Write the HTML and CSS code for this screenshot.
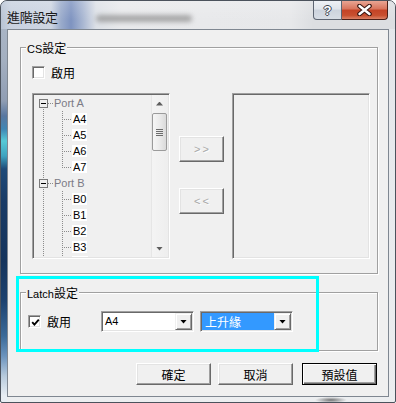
FILE: index.html
```html
<!DOCTYPE html>
<html>
<head>
<meta charset="utf-8">
<title>進階設定</title>
<link rel="stylesheet" href="styles.css">
</head>
<body>
<div class="window">
  <div class="titlebar">
    <span class="title cjk">進階設定</span>
    <span class="ghost"></span>
    <div class="caption">
      <div class="cap-btn help">?</div>
      <div class="cap-btn close">
        <svg width="17" height="12" viewBox="0 0 17 12"><path d="M3.5 2 L13.5 10 M13.5 2 L3.5 10" stroke="#3a1712" stroke-width="4.6" stroke-linecap="round" fill="none"/><path d="M3.5 2 L13.5 10 M13.5 2 L3.5 10" stroke="#ffffff" stroke-width="2.4" stroke-linecap="round" fill="none"/></svg>
      </div>
    </div>
  </div>
  <div class="client">
    <div class="group cs-group">
      <span class="group-title">CS<span class="cjk">設定</span></span>
      <div class="check-row">
        <span class="checkbox"></span><span class="check-label cjk">啟用</span>
      </div>
      <div class="lists">
        <div class="tree sunken">
          <div class="tree-items">
            <div class="row port first"><span class="exp"></span><span class="hdots"></span><span class="port-label">Port A</span></div>
            <div class="row child"><span class="elbow"></span><span class="item">A4</span></div>
            <div class="row child"><span class="elbow"></span><span class="item">A5</span></div>
            <div class="row child"><span class="elbow"></span><span class="item">A6</span></div>
            <div class="row child"><span class="elbow last"></span><span class="item">A7</span></div>
            <div class="row port"><span class="exp"></span><span class="hdots"></span><span class="port-label">Port B</span></div>
            <div class="row child"><span class="elbow"></span><span class="item">B0</span></div>
            <div class="row child"><span class="elbow"></span><span class="item">B1</span></div>
            <div class="row child"><span class="elbow"></span><span class="item">B2</span></div>
            <div class="row child"><span class="elbow"></span><span class="item">B3</span></div>
            <div class="row child"><span class="elbow"></span><span class="item item-partial"></span></div>
          </div>
          <div class="scrollbar">
            <div class="sb-btn"><span class="tri-up"></span></div>
            <div class="sb-thumb"><span class="grip"></span></div>
            <div class="sb-space"></div>
            <div class="sb-btn"><span class="tri-down"></span></div>
          </div>
        </div>
        <div class="move-btns">
          <div class="btn disabled">&gt;&gt;</div>
          <div class="btn disabled">&lt;&lt;</div>
        </div>
        <div class="listbox sunken"></div>
      </div>
    </div>

    <div class="group latch-group">
      <span class="group-title">Latch<span class="cjk">設定</span></span>
      <div class="latch-row">
        <div class="check-wrap">
          <span class="checkbox checked"><svg width="9" height="9" viewBox="0 0 9 9"><path d="M1.2 4.2 L3.4 6.6 L7.8 1.6" stroke="#000" stroke-width="1.9" fill="none"/></svg></span>
          <span class="check-label cjk">啟用</span>
        </div>
        <div class="combo sunken">
          <span class="combo-text">A4</span>
          <span class="combo-btn"><span class="tri-down dark"></span></span>
        </div>
        <div class="combo sunken">
          <span class="combo-text selected cjk">上升緣</span>
          <span class="combo-btn"><span class="tri-down dark"></span></span>
        </div>
      </div>
    </div>

    <div class="actions">
      <div class="btn push cjk">確定</div>
      <div class="btn push cjk">取消</div>
      <div class="btn push default cjk">預設值</div>
    </div>

    <div class="highlight"></div>
  </div>
</div>
</body>
</html>
```

FILE: styles.css
```css
* { box-sizing: border-box; }
html, body { margin: 0; padding: 0; }
body {
  width: 396px;
  height: 403px;
  overflow: hidden;
  background: #ffffff;
  font-family: "Liberation Sans", Arial, "Noto Sans CJK TC", sans-serif;
  font-size: 11px;
  color: #000;
}
.cjk {
  font-family: "Noto Sans CJK TC", "Noto Sans CJK JP", sans-serif;
  font-size: 12px;
}

/* window frame */
.window {
  width: 396px;
  height: 403px;
  border: 1px solid #4b525c;
  border-radius: 7px 7px 2px 2px;
  display: flex;
  flex-direction: column;
  overflow: hidden;
  background:
    linear-gradient(to bottom, #aeb9c9 0, #a3afc0 60px, #8f9db3 100px, #5877a0 115px, #3f86b4 128px, #56c9d6 140px, #3ea3bf 155px, #1e4a78 168px, #193b66 200px, #15345c 260px, #1d4270 300px, #3b6a99 335px, #6b93bd 355px, #b7cadc 375px, #e8eef4 395px) 0 0 / 6px 100% no-repeat,
    radial-gradient(ellipse 16px 3px at 330px 399px, rgba(50,50,50,.65), rgba(50,50,50,0)),
    linear-gradient(to bottom, #e3e6ea, #eceef0);
}

.titlebar {
  height: 28px;
  flex: none;
  display: flex;
  align-items: flex-start;
  background:
    linear-gradient(to bottom, rgba(255,255,255,.18), rgba(255,255,255,0) 70%),
    linear-gradient(to right, #b8c3d4 0, #c9d2e0 10px, #cdd5e2 50px, #9aabcb 60px, #7e93c0 70px, #a9b7d2 82px, #dde1e7 95px, #e9eaec 120px, #e7e8ea 290px, #dcdee1 312px);
}
.title {
  padding: 8px 0 0 6px;
  font-size: 13px;
  line-height: 15px;
  letter-spacing: -0.3px;
  color: #1a1a1a;
}
.ghost {
  width: 96px;
  height: 7px;
  margin: 14px 0 0 38px;
  border-radius: 4px;
  background: #8a8a8a;
  filter: blur(2.5px);
  opacity: .7;
}
.caption {
  margin-left: auto;
  margin-right: 7px;
  display: flex;
}
.cap-btn {
  height: 19px;
  display: flex;
  align-items: center;
  justify-content: center;
}
.help {
  width: 29px;
  border: 1px solid #5d6572;
  border-top: none;
  border-radius: 0 0 0 4px;
  background: linear-gradient(to bottom, #eef1f5 0, #e0e5eb 45%, #ccd3dd 50%, #d7dde5 100%);
  color: #fff;
  font: bold 13px "Liberation Sans", Arial, sans-serif;
  text-shadow: 1px 0 0 #3c4450, -1px 0 0 #3c4450, 0 1px 0 #3c4450, 0 -1px 0 #3c4450;
}
.close {
  width: 46px;
  border: 1px solid #4a1f17;
  border-top: none;
  border-left: none;
  border-radius: 0 0 4px 0;
  background: linear-gradient(to bottom, #e9a593 0, #d8735b 45%, #c44326 50%, #c8502f 80%, #dc8266 100%);
}

/* client area */
.client {
  position: relative;
  margin: 0 6px;
  height: 368px;
  flex: none;
  border: 1px solid #7f8791;
  background: #f0f0f0;
  padding: 17px 10px 0 12px;
  display: flex;
  flex-direction: column;
}

.group {
  position: relative;
  border: 1px solid #a0a0a0;
  box-shadow: inset 1px 1px 0 #fff, 1px 1px 0 #fff;
}
.group-title {
  position: absolute;
  top: -8px;
  left: 5px;
  padding: 0 1px;
  background: #f0f0f0;
  line-height: 15px;
  color: #000;
  white-space: nowrap;
}

.cs-group {
  height: 227px;
  padding: 18px 0 0 11px;
}
.check-row {
  display: flex;
  align-items: center;
  height: 13px;
}
.checkbox {
  width: 13px;
  height: 13px;
  flex: none;
  border: 1px solid;
  border-color: #a0a0a0 #fff #fff #a0a0a0;
  box-shadow: inset 1px 1px 0 #696969, inset -1px -1px 0 #e3e3e3;
  background: #fff;
  display: flex;
  align-items: center;
  justify-content: center;
}
.checkbox svg { display: block; margin: 1px 0 0 1px; }
.check-label {
  margin-left: 6px;
  line-height: 15px;
}

.lists {
  display: flex;
  margin-top: 14px;
  height: 166px;
}
.sunken {
  border: 1px solid;
  border-color: #a0a0a0 #fff #fff #a0a0a0;
  box-shadow: inset 1px 1px 0 #696969, inset -1px -1px 0 #e3e3e3;
  padding: 1px;
  background: #f0f0f0;
}
.tree {
  width: 138px;
  display: flex;
}
.tree-items {
  flex: 1;
  overflow: hidden;
}
.row {
  height: 16px;
  display: flex;
  align-items: flex-start;
  white-space: nowrap;
}
.row.port {
  padding-left: 5px;
  background: repeating-linear-gradient(to bottom, #8c8c8c 0 1px, transparent 1px 2px) 9px 0 / 1px 16px no-repeat;
}
.row.port.first {
  background-position: 9px 12px;
  background-size: 1px 4px;
}
.exp {
  width: 9px;
  height: 9px;
  flex: none;
  margin-top: 4px;
  border: 1px solid #7a7a7a;
  background: linear-gradient(#000, #000) center / 5px 1px no-repeat, #f0f0f0;
}
.hdots {
  width: 5px;
  height: 16px;
  flex: none;
  background: repeating-linear-gradient(to right, #8c8c8c 0 1px, transparent 1px 2px) 0 8px / 5px 1px no-repeat;
}
.port-label {
  margin-left: 1px;
  line-height: 16px;
  color: #7b7b86;
}
.row.child {
  padding-left: 28px;
  background: repeating-linear-gradient(to bottom, #8c8c8c 0 1px, transparent 1px 2px) 9px 0 / 1px 16px no-repeat;
}
.elbow {
  width: 10px;
  height: 16px;
  flex: none;
  background:
    repeating-linear-gradient(to right, #8c8c8c 0 1px, transparent 1px 2px) 2px 8px / 8px 1px no-repeat,
    repeating-linear-gradient(to bottom, #8c8c8c 0 1px, transparent 1px 2px) 0 0 / 1px 16px no-repeat;
}
.elbow.last {
  background:
    repeating-linear-gradient(to right, #8c8c8c 0 1px, transparent 1px 2px) 2px 8px / 8px 1px no-repeat,
    repeating-linear-gradient(to bottom, #8c8c8c 0 1px, transparent 1px 2px) 0 0 / 1px 9px no-repeat;
}
.item {
  margin-top: 2px;
  height: 12px;
  line-height: 12px;
  padding: 0 1px;
  background: #fff;
  color: #000;
}
.item-partial {
  width: 16px;
  margin-top: 1px;
}

.scrollbar {
  width: 17px;
  flex: none;
  display: flex;
  flex-direction: column;
  background: linear-gradient(to right, #e6e6e6 0 1px, #f4f4f4 1px, #eeeeee);
}
.sb-btn {
  height: 17px;
  flex: none;
  display: flex;
  align-items: center;
  justify-content: center;
}
.tri-up {
  width: 7px;
  height: 4px;
  background: #5e5e5e;
  clip-path: polygon(50% 0, 100% 100%, 0 100%);
}
.tri-down {
  width: 7px;
  height: 4px;
  background: #5e5e5e;
  clip-path: polygon(0 0, 100% 0, 50% 100%);
}
.tri-down.dark { background: #000; }
.sb-thumb {
  height: 38px;
  flex: none;
  margin: 1px 1px 0 1px;
  border: 1px solid #9b9b9b;
  border-radius: 2px;
  background: linear-gradient(to right, #f6f6f6, #ebebeb 50%, #dadada);
  display: flex;
  align-items: center;
  justify-content: center;
}
.grip {
  width: 7px;
  height: 7px;
  background: repeating-linear-gradient(to bottom, #6c6c6c 0 1px, transparent 1px 2px);
}
.sb-space { flex: 1; }

.move-btns {
  width: 45px;
  margin-left: 9px;
  padding-top: 43px;
  display: flex;
  flex-direction: column;
  gap: 26px;
}
.btn {
  display: flex;
  align-items: center;
  justify-content: center;
  background: #f0f0f0;
  border: 1px solid;
  border-color: #fff #696969 #696969 #fff;
  box-shadow: inset -1px -1px 0 #a0a0a0, inset 1px 1px 0 #e3e3e3;
}
.btn.disabled {
  height: 26px;
  color: #a8a8a8;
  letter-spacing: 2px;
  padding-left: 2px;
  text-shadow: 1px 1px 0 #fff;
}
.listbox {
  width: 138px;
  margin-left: 8px;
}

/* latch */
.latch-group {
  margin-top: 18px;
  height: 59px;
  padding: 18px 0 0 7px;
}
.latch-row {
  display: flex;
  align-items: center;
  height: 21px;
}
.check-wrap {
  width: 73px;
  flex: none;
  display: flex;
  align-items: center;
}
.combo {
  width: 93px;
  height: 21px;
  flex: none;
  display: flex;
  background: #fff;
}
.combo + .combo { margin-left: 6px; }
.combo-text {
  flex: 1;
  padding-left: 2px;
  line-height: 17px;
}
.combo-text.selected {
  background: #3399ff;
  color: #fff;
  padding-left: 3px;
}
.combo-btn {
  width: 17px;
  flex: none;
  display: flex;
  align-items: center;
  justify-content: center;
  background: #f0f0f0;
  border: 1px solid;
  border-color: #f0f0f0 #696969 #696969 #f0f0f0;
  box-shadow: inset 1px 1px 0 #fff, inset -1px -1px 0 #a0a0a0;
}

/* bottom buttons */
.actions {
  margin-top: 12px;
  height: 22px;
  display: flex;
  justify-content: flex-end;
  gap: 7px;
  padding-right: 1px;
}
.btn.push {
  width: 75px;
  height: 22px;
  line-height: 15px;
}
.btn.default {
  margin-left: 2px;
  border: 1px solid #000;
  box-shadow: inset 1px 1px 0 #fff, inset -1px -1px 0 #696969, inset -2px -2px 0 #a0a0a0;
}

/* annotation highlight */
.highlight {
  position: absolute;
  left: 8px;
  top: 246px;
  width: 303px;
  height: 76px;
  border: 3px solid #00ffff;
  pointer-events: none;
}
```
